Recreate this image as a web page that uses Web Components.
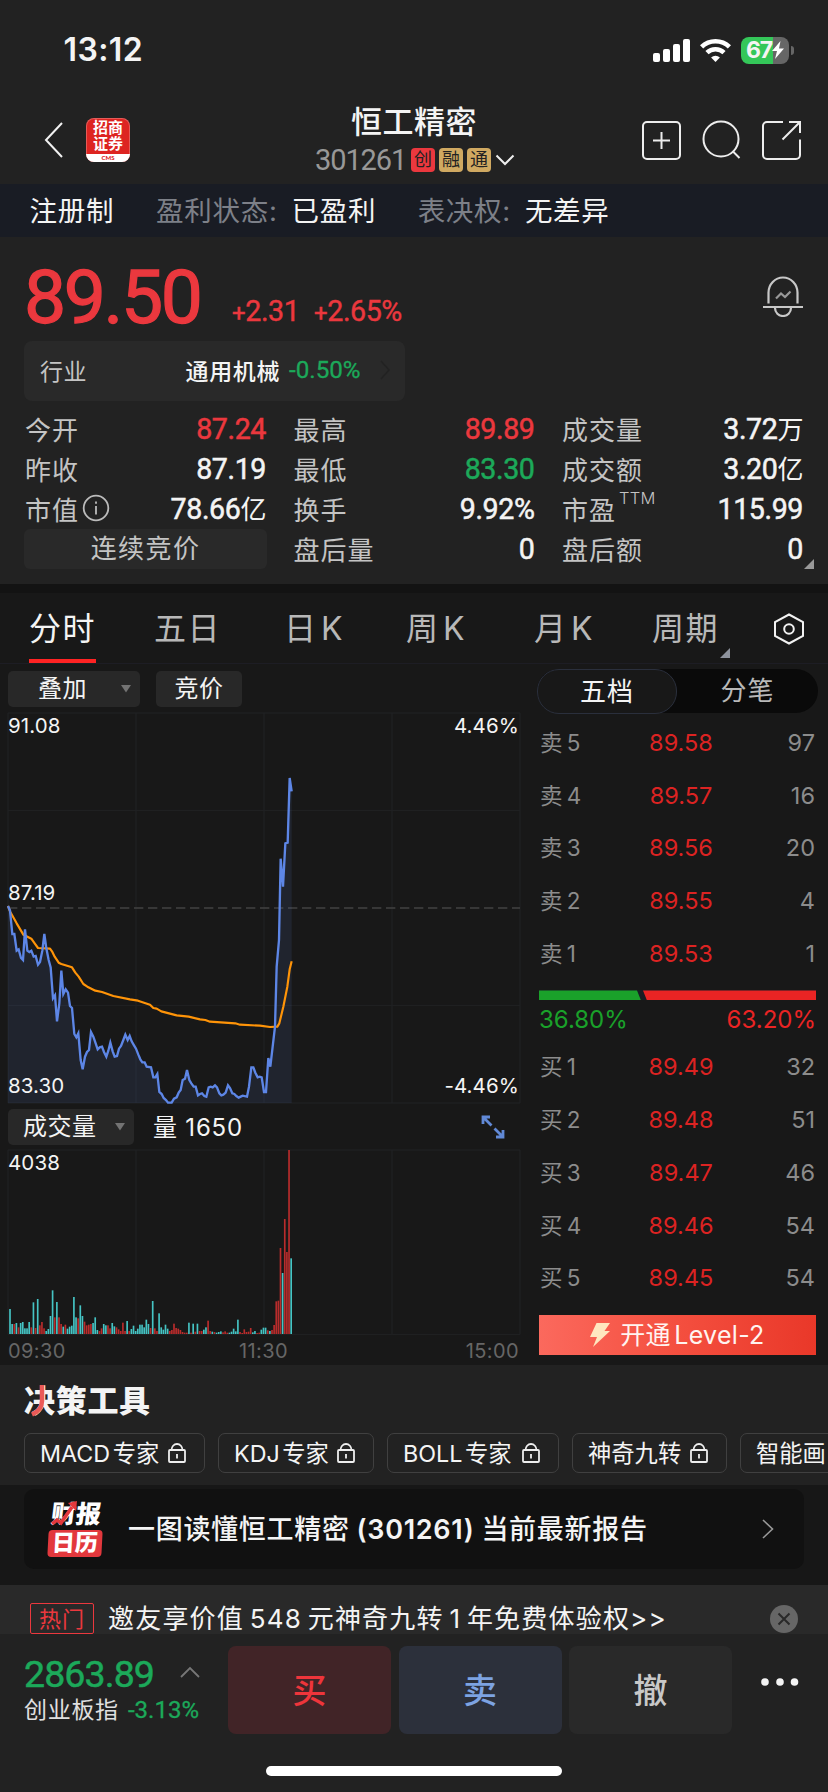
<!DOCTYPE html>
<html lang="zh-CN">
<head>
<meta charset="UTF-8">
<title>恒工精密 301261</title>
<style>
    :root {
        --bg: #222222;
        --bg-dark: #181818;
        --bg-box: #292929;
        --up: #eb383e;
        --down: #1ca95a;
        --label: #c4c4c4;
        --din: Roboto, "Noto Sans CJK SC", sans-serif;
    }

    body {
        margin: 0;
        width: 828px;
        height: 1792px;
        overflow: hidden;
        background: var(--bg);
        color: #f4f4f4;
        font-family: Inter, "Noto Sans CJK SC", sans-serif;
    }
</style>
</head>
<body>
<stock-page></stock-page>

<script>
function define(name, render) {
    customElements.define(name, class extends HTMLElement {
        connectedCallback() {
            if (this.shadowRoot) return;
            const shadow = this.attachShadow({ mode: "open" });
            shadow.innerHTML = "<style>* { box-sizing: border-box; } svg { display: block; flex: none; } span { white-space: nowrap; }</style>" + render(this);
        }
    });
}

define("status-bar", () => `
    <style>
        :host {
            display: flex;
            justify-content: space-between;
            align-items: center;
            height: 100px;
            padding: 0 34px 0 63.5px;
        }

        .time {
            font-size: 32px;
            font-weight: 600;
            line-height: 40px;
            letter-spacing: 0.4px;
        }

        .icons {
            display: flex;
            align-items: center;
            gap: 10px;
        }

        .battery {
            display: flex;
            align-items: center;
            gap: 2px;
        }

        .battery__body {
            display: flex;
            align-items: center;
            width: 48px;
            height: 27px;
            padding-left: 5px;
            border-radius: 8px;
            background: linear-gradient(to right, #34c759 32px, #666 32px);
            font-size: 23px;
            font-weight: 700;
            letter-spacing: -1.2px;
        }

        .battery__cap {
            width: 3px;
            height: 9px;
            border-radius: 0 4px 4px 0;
            background: #666;
        }
    </style>
    <span class="time">13:12</span>
    <div class="icons">
        <svg width="37" height="23" viewBox="0 0 37 23" fill="#fff">
            <rect x="0" y="14" width="7" height="9" rx="2"/>
            <rect x="10" y="10" width="7" height="13" rx="2"/>
            <rect x="20" y="5" width="7" height="18" rx="2"/>
            <rect x="30" y="0" width="7" height="23" rx="2"/>
        </svg>
        <svg width="31" height="24" viewBox="0 0 31 24" fill="none" stroke="#fff" stroke-width="4.6">
            <path d="M1.6 8.8A20 20 0 0 1 29.4 8.8"/>
            <path d="M7 14.6A12.4 12.4 0 0 1 24 14.6"/>
            <path d="M15.5 24l-4.4-4.6a6.5 6.5 0 0 1 8.8 0z" fill="#fff" stroke="none"/>
        </svg>
        <div class="battery">
            <div class="battery__body">
                67
                <svg width="12" height="18" viewBox="0 0 12 18" fill="#fff"><path d="M8.5 0L0 10h5L3 18l9-10.5H7z"/></svg>
            </div>
            <div class="battery__cap"></div>
        </div>
    </div>
`);

define("nav-header", () => `
    <style>
        :host {
            display: grid;
            grid-template-columns: 315px 1fr 187px;
            height: 84px;
        }

        .left {
            display: flex;
            align-items: center;
            gap: 23px;
            padding: 0 0 4px 44px;
        }

        .logo {
            display: flex;
            flex-direction: column;
            width: 44px;
            height: 44px;
            padding-top: 2px;
            overflow: hidden;
            border-radius: 8px;
            background: #dd2421;
            box-shadow: inset 0 0 0 1px rgba(255 255 255 / 0.25);
            text-align: center;
            font-size: 15px;
            font-weight: 700;
            line-height: 16px;
            color: #fff;
        }

        .logo__cms {
            height: 8px;
            margin-top: 2px;
            background: #fff;
            color: #dd2421;
            font: 900 6px/8px Lato, sans-serif;
        }

        .middle {
            display: flex;
            flex-direction: column;
        }

        .name {
            height: 42px;
            padding-left: 36px;
            font-size: 31px;
            font-weight: 500;
            line-height: 44px;
            letter-spacing: 0.5px;
        }

        .code {
            display: flex;
            align-items: center;
            gap: 4px;
            height: 36px;
        }

        .code__num {
            width: 92px;
            font: 400 29px/36px var(--din);
            letter-spacing: -1.1px;
            color: #989898;
        }

        .tag {
            width: 24px;
            height: 24px;
            border-radius: 4px;
            background: #d0a961;
            color: #222;
            font-size: 18px;
            line-height: 24px;
            text-align: center;
        }

        .tag--red {
            background: var(--up);
        }

        .right {
            display: flex;
            align-items: center;
            gap: 20px;
            padding-bottom: 4px;
        }
    </style>
    <div class="left">
        <svg width="19" height="36" viewBox="0 0 19 36" fill="none" stroke="#f2f2f2" stroke-width="2"><path d="M18 1L2 18l16 17"/></svg>
        <div class="logo">
            <span>招商</span>
            <span>证券</span>
            <div class="logo__cms">CMS</div>
        </div>
    </div>
    <div class="middle">
        <span class="name">恒工精密</span>
        <div class="code">
            <span class="code__num">301261</span>
            <span class="tag tag--red">创</span>
            <span class="tag">融</span>
            <span class="tag">通</span>
            <svg width="20" height="12" viewBox="0 0 20 12" fill="none" stroke="#eee" stroke-width="2"><path d="M1.5 1.5L10 10l8.5-8.5"/></svg>
        </div>
    </div>
    <div class="right">
        <svg width="40" height="40" viewBox="0 0 40 40" fill="none" stroke="#ededed" stroke-width="2">
            <rect x="2" y="2" width="37" height="37" rx="4"/>
            <path d="M20.5 12v17M12 20.5h17"/>
        </svg>
        <svg width="40" height="40" viewBox="0 0 40 40" fill="none" stroke="#ededed" stroke-width="2">
            <circle cx="20" cy="19" r="17.5"/>
            <path d="M31.5 31l7 7"/>
        </svg>
        <svg width="40" height="40" viewBox="0 0 40 40" fill="none" stroke="#ededed" stroke-width="2">
            <path d="M22 2H6a4 4 0 0 0-4 4v29a4 4 0 0 0 4 4h29a4 4 0 0 0 4-4V19.5"/>
            <path d="M28 2h11v11M39 2L21.5 19.5"/>
        </svg>
    </div>
`);

define("info-strip", () => `
    <style>
        :host {
            display: flex;
            align-items: center;
            height: 53px;
            padding-left: 29.5px;
            background: #191c24;
            font-size: 27.5px;
            line-height: 53px;
            letter-spacing: 0.7px;
        }

        span { padding-top: 2px; }

        .key {
            margin-right: 14px;
            color: #7d8088;
        }

        .status { margin-right: 41.5px; }
        .first { margin-right: 42px; }
    </style>
    <span class="first">注册制</span>
    <span class="key">盈利状态:</span>
    <span class="status">已盈利</span>
    <span class="key">表决权:</span>
    <span>无差异</span>
`);

define("stat-cell", (el) => `
    <style>
        :host {
            display: flex;
            justify-content: space-between;
            height: 40px;
            padding: 0 1px;
            color: #f4f4f4;
        }

        .label {
            display: flex;
            align-items: center;
            padding-bottom: 2px;
            color: var(--label);
            font-size: 26px;
            letter-spacing: 1px;
        }

        .value {
            font: 400 28.6px/40px var(--din);
            letter-spacing: -0.4px;
            -webkit-text-stroke: 0.5px;
        }

        .value b {
            font-size: 26px;
            font-weight: 400;
            -webkit-text-stroke: 0;
        }
    </style>
    <div class="label"><slot></slot></div>
    <span class="value" style="color: ${el.getAttribute("color") || "inherit"}">${el.getAttribute("value").replace(/[万亿]/, "<b>$&</b>")}</span>
`);

define("quote-panel", () => `
    <style>
        :host {
            display: flex;
            flex-direction: column;
            height: 347px;
            padding: 12px 24px 0;
        }

        .head {
            display: flex;
            height: 92px;
            color: var(--up);
            font-family: var(--din);
        }

        .price {
            width: 208px;
            font-size: 75px;
            line-height: 96px;
            letter-spacing: -2.4px;
            -webkit-text-stroke: 1.3px;
        }

        .change {
            width: 82px;
            margin-top: 45px;
            font-size: 28.6px;
            line-height: 34px;
            letter-spacing: -0.4px;
            -webkit-text-stroke: 0.4px;
        }

        .change small { font-size: 24px; }

        .bell {
            margin: 26px 1px 0 auto;
        }

        .industry {
            display: flex;
            align-items: center;
            width: 381px;
            height: 60px;
            padding: 0 15px 2px 16px;
            border-radius: 8px;
            background: var(--bg-box);
            font-size: 23px;
            letter-spacing: 0.6px;
        }

        .industry__label {
            margin-right: auto;
            color: var(--label);
        }

        .industry__name { font-weight: 500; }

        .industry__change {
            width: 100px;
            padding-left: 9px;
            color: var(--down);
            font: 400 24.2px/58px var(--din);
            letter-spacing: 0;
            -webkit-text-stroke: 0.3px;
        }

        .stats {
            display: grid;
            grid-template-columns: 243px 243px 243px;
            column-gap: 25.5px;
            margin-top: 8px;
        }

        .info { margin-left: 3px; }

        .phase {
            height: 40px;
            border-radius: 6px;
            background: var(--bg-box);
            color: var(--label);
            font-size: 26px;
            line-height: 40px;
            letter-spacing: 1.4px;
            text-align: center;
        }

        .ttm {
            margin: -20px 0 0 3px;
            font-size: 16.5px;
            font-weight: 300;
            letter-spacing: 0.2px;
        }

        .more {
            align-self: flex-end;
            width: 10px;
            height: 10px;
            margin: -10px -10px 0 0;
            background: #999;
            clip-path: polygon(100% 0, 100% 100%, 0 100%);
        }
    </style>
    <div class="head">
        <span class="price">89.50</span>
        <span class="change"><small>+</small>2.31</span>
        <span class="change"><small>+</small>2.65%</span>
        <svg class="bell" width="40" height="42" viewBox="0 0 40 42" fill="none" stroke="#c8c8c8" stroke-width="2.2">
            <path d="M5.5 28.5V17.5a14.5 15 0 0 1 29 0v11"/>
            <path d="M0 32h40M12 33a8 8 0 0 0 16 0" />
            <path d="M13 23.5l5-5 4 3.5 5.5-5.5" stroke="#999"/>
        </svg>
    </div>
    <div class="industry">
        <span class="industry__label">行业</span>
        <span class="industry__name">通用机械</span>
        <span class="industry__change">-0.50%</span>
        <svg width="10" height="20" viewBox="0 0 10 20" fill="none" stroke="#222" stroke-width="1.5"><path d="M1 1l8 9-8 9"/></svg>
    </div>
    <div class="stats">
        <stat-cell value="87.24" color="var(--up)">今开</stat-cell>
        <stat-cell value="89.89" color="var(--up)">最高</stat-cell>
        <stat-cell value="3.72万">成交量</stat-cell>
        <stat-cell value="87.19">昨收</stat-cell>
        <stat-cell value="83.30" color="var(--down)">最低</stat-cell>
        <stat-cell value="3.20亿">成交额</stat-cell>
        <stat-cell value="78.66亿">市值<svg class="info" width="28" height="28" viewBox="0 0 28 28" fill="none" stroke="#bbb" stroke-width="1.8"><circle cx="14" cy="14" r="12.3"/><path d="M14 12v8.5M14 7.5v2.2"/></svg></stat-cell>
        <stat-cell value="9.92%">换手</stat-cell>
        <stat-cell value="115.99">市盈<span class="ttm">TTM</span></stat-cell>
        <div class="phase">连续竞价</div>
        <stat-cell value="0">盘后量</stat-cell>
        <stat-cell value="0">盘后额</stat-cell>
    </div>
    <div class="more"></div>
`);

define("period-tabs", () => `
    <style>
        :host {
            display: flex;
            height: 80px;
            padding-left: 29px;
            border-top: 9px solid #131313;
            border-bottom: 1px solid #1d1d24;
            background: var(--bg-dark);
            color: #b8b8b8;
            font-size: 32px;
            line-height: 72px;
            letter-spacing: 1.5px;
        }

        .tab--active {
            width: 67px;
            border-bottom: 4px solid #ff2323;
            color: #f4f4f4;
        }

        .k {
            width: 125px;
            word-spacing: -7px;
        }

        .corner {
            width: 10px;
            height: 10px;
            margin: 55px 43px 0 0;
            background: #8d929c;
            clip-path: polygon(100% 0, 100% 100%, 0 100%);
        }

        svg { margin-top: 20px; }
    </style>
    <span class="tab--active">分时</span>
    <span style="width: 131px; padding-left: 58px; margin-right: 57px">五日</span>
    <span class="k" style="width: 122px">日 K</span>
    <span class="k" style="width: 128px">周 K</span>
    <span class="k" style="width: 118px">月 K</span>
    <span style="width: 68px">周期</span>
    <span class="corner"></span>
    <svg width="32" height="32" viewBox="0 0 32 32" fill="none" stroke="#f2f2f2" stroke-width="2"><path d="M16 1.5l14 7.5v14L16 30.5 2 23V9z"/><circle cx="16" cy="16" r="4.8"/></svg>
`);

// Coordinates are in thirds of a pixel
const price = "24,78 30,92 37,162 43,162 50,212 56,208 63,234 69,240 75,148 82,212 88,216 94,212 101,230 107,228 114,254 120,246 127,212 133,162 139,205 146,240 152,262 159,355 165,346 171,424 178,370 184,272 190,342 197,328 204,338 210,378 216,384 223,462 229,472 235,460 242,540 248,568 255,530 261,516 267,510 273,456 280,470 287,490 293,508 299,502 306,500 312,516 319,530 325,512 331,488 338,514 344,530 351,528 357,506 363,498 370,480 376,464 383,480 389,468 395,484 402,496 408,506 415,524 421,538 427,547 434,547 440,560 453,562 460,592 466,592 472,582 478,636 485,642 491,654 498,660 504,668 515,668 522,656 530,652 536,638 542,630 548,600 555,596 561,570 568,600 574,610 581,620 587,620 594,646 600,642 606,640 613,648 619,650 626,622 632,620 638,622 645,616 651,622 658,640 664,646 670,644 677,638 684,616 690,624 697,640 703,642 709,648 716,653 722,650 728,647 741,650 747,620 754,562 760,562 766,578 773,592 779,590 785,592 792,636 798,636 805,534 811,560 818,500 825,440 830,260 837,180 842,-64 849,20 856,-110 863,-112 869,-306 875,-266";
const average = "24,78 31,96 50,130 70,164 78,168 94,176 104,190 114,204 150,206 156,214 164,230 176,248 184,252 216,262 226,278 236,290 250,312 262,320 286,332 306,336 340,348 390,358 414,362 450,374 460,384 470,386 484,394 530,406 566,410 600,418 616,420 630,425 706,430 720,434 780,437 810,441 832,440 838,430 850,380 862,320 869,268 875,244";

// c = down minute, r = up minute
const volume = "c75 c30 r30 c33 r20 c33 c36 c17 c17 c36 r20 c95 r18 c105 r26 r36 r17 c9 c15 c54 c131 r50 c96 r50 r30 c22 r28 c16 c22 c25 c111 c50 r47 c86 c54 r37 r26 r28 r30 c33 c50 c12 r9 r17 c30 c26 r26 r17 c33 c23 r20 r14 r9 r34 r9 c39 r9 c15 c25 c9 c16 c28 c28 c20 c43 c30 r18 c99 r17 r9 c62 c20 c13 c28 c16 r9 r12 r31 r18 r16 r12 r6 r4 r4 c34 r4 c31 r7 c31 r9 r9 c13 c20 r40 r9 c7 r6 c4 c6 c8 r5 r8 r4 c4 c7 c16 c8 c43 r6 r3 r14 r6 r7 r18 c5 c9 r3 r4 c13 c19 c19 r11 c9 r12 r27 r98 r100 r258 c183 r345 r246 r552 c227";
const bars = volume.split(" ").map((v, i) => {
    const h = Number(v.slice(1));
    const fill = v[0] === "c" ? "#45c4c4" : "#b92c2c";
    return `<rect x="${(3.5 + 6.39 * i).toFixed(1)}" y="${552 - h}" width="5" height="${h}" fill="${fill}"/>`;
}).join("");

define("drop-button", () => `
    <style>
        :host {
            display: flex;
            align-items: center;
            justify-content: space-between;
            height: 36px;
            border-radius: 5px;
            background: #282828;
            font-size: 24px;
            line-height: 36px;
            letter-spacing: 0.5px;
        }
    </style>
    <span><slot></slot></span>
    <svg width="10" height="8" viewBox="0 0 10 8" fill="#737373"><path d="M0 0h10L5 7.5z"/></svg>
`);

define("time-chart", () => `
    <style>
        :host {
            display: flex;
            flex-direction: column;
            width: 512px;
            padding-top: 7px;
            margin-left: 8px;
        }

        .row {
            display: flex;
            align-items: center;
            height: 42px;
            font-size: 24px;
            letter-spacing: 0.5px;
        }

        .row--top { align-items: flex-start; }
        .row--volume { height: 47px; }

        .amount {
            margin-left: 19px;
            padding-bottom: 3px;
            letter-spacing: 0.8px;
        }

        .auction {
            width: 86px;
            height: 36px;
            margin-left: 16px;
            border-radius: 5px;
            background: #282828;
            line-height: 36px;
            text-align: center;
        }

        .plot {
            display: grid;
            height: 390px;
        }

        .plot--volume { height: 185px; }
        .plot > * { grid-area: 1 / 1; }

        .marks {
            display: flex;
            flex-direction: column;
            justify-content: space-between;
            padding: 0 1px 4px 0;
            font-size: 20.5px;
            line-height: 26px;
            letter-spacing: 0.1px;
        }

        .marks div {
            display: flex;
            justify-content: space-between;
        }

        .expand { margin: 0 15px 0 auto; }

        .times {
            display: grid;
            grid-template-columns: 1fr 1fr 1fr;
            height: 30px;
            padding: 0 1px 0 0;
            color: #666;
            font-size: 20px;
            line-height: 32px;
            letter-spacing: 0.4px;
        }
    </style>
    <div class="row row--top">
        <drop-button style="width: 132px; padding: 0 9px 0 30px">叠加</drop-button>
        <span class="auction">竞价</span>
    </div>
    <div class="plot">
        <svg width="512" height="390" viewBox="24 -501 1536 1170" fill="none" overflow="visible">
            <path d="M24-501H1560V669H24zM408-501V669M792-501V669M1176-501V669M24-209H1560M24 376H1560" stroke="#212224" stroke-width="3"/>
            <path d="M24 84H1560" stroke="#424242" stroke-width="5" stroke-dasharray="28 14"/>
            <polygon points="24,669 ${price} 875,669" fill="#6088e0" fill-opacity="0.11"/>
            <polyline points="${average}" stroke="#ff9408" stroke-width="6.5" stroke-linejoin="round"/>
            <polyline points="${price}" stroke="#5d86e6" stroke-width="7"/>
        </svg>
        <div class="marks">
            <div><span>91.08</span><span>4.46%</span></div>
            <div style="margin-top: -26px"><span>87.19</span></div>
            <div><span>83.30</span><span>-4.46%</span></div>
        </div>
    </div>
    <div class="row row--volume">
        <drop-button style="width: 126px; padding: 0 9px 0 15px">成交量</drop-button>
        <span class="amount">量 1650</span>
        <svg class="expand" width="24" height="24" viewBox="0 0 24 24" fill="none" stroke="#6189d6" stroke-width="2.8">
            <path d="M9 2H2V9M2 2l8.5 8.5M15 22h7V15M22 22l-8.5-8.5"/>
        </svg>
    </div>
    <div class="plot plot--volume">
        <svg width="512" height="185" viewBox="0 0 1536 555" fill="none" overflow="visible">
            <path d="M0 0H1536V553H0zM384 0V553M768 0V553M1152 0V553" stroke="#212224" stroke-width="3"/>
            ${bars}
        </svg>
        <div class="marks"><div><span>4038</span></div></div>
    </div>
    <div class="times">
        <span>09:30</span>
        <span style="text-align: center">11:30</span>
        <span style="text-align: right">15:00</span>
    </div>
`);

define("book-row", (el) => `
    <style>
        :host {
            display: grid;
            grid-template-columns: 96px 90px 1fr;
            height: 52.7px;
            padding: 0 1px;
            color: #8c8c8c;
            font-size: 23.5px;
            line-height: 52.7px;
        }

        .price {
            color: #dc2322;
            text-align: center;
        }

        .count { text-align: right; }
        .side {
            font-size: 22.5px;
            word-spacing: -2px;
        }
    </style>
    <span class="side">${el.getAttribute("side")}</span>
    <span class="price">${el.getAttribute("price")}</span>
    <span class="count">${el.getAttribute("count")}</span>
`);

define("order-book", () => `
    <style>
        :host {
            display: flex;
            flex-direction: column;
            width: 281px;
            padding-top: 5px;
            margin-right: 10px;
        }

        .switch {
            display: grid;
            grid-template-columns: 140px 141px;
            height: 44px;
            border-radius: 22px;
            background: #0a0a0a;
            color: #b8b8b8;
            font-size: 26px;
            line-height: 43px;
            letter-spacing: 1px;
            text-align: center;
        }

        .switch__on {
            border: 1px solid #2a2f3c;
            border-radius: 22px;
            background: #181818;
            color: #f4f4f4;
        }

        .rows, .ratio, .percent { margin: 0 2px; }
        .rows { margin-top: 4px; }

        .ratio {
            display: flex;
            justify-content: space-between;
            height: 10px;
            margin-top: 10px;
            background: #191c24;
        }

        .ratio__buy {
            width: 102px;
            background: #1aa12a;
            clip-path: polygon(0 0, 98px 0, 102px 100%, 0 100%);
        }

        .ratio__sell {
            width: 173px;
            background: #ea2424;
            clip-path: polygon(0 0, 100% 0, 100% 100%, 4px 100%);
        }

        .percent {
            display: flex;
            justify-content: space-between;
            height: 37px;
            color: #1aa12a;
            font-size: 24px;
            line-height: 40px;
        }

        .level2 {
            display: flex;
            align-items: center;
            justify-content: center;
            gap: 10px;
            height: 40px;
            margin: 10px 2px 0;
            background: linear-gradient(to right, #fb695d, #f44f3f 50%, #e93829);
            color: #fff4f0;
            font-size: 25px;
            letter-spacing: 0.3px;
            word-spacing: -4px;
        }

        .level2 span { padding-bottom: 4px; }
    </style>
    <div class="switch">
        <span class="switch__on">五档</span>
        <span>分笔</span>
    </div>
    <div class="rows">
        <book-row side="卖 5" price="89.58" count="97"></book-row>
        <book-row side="卖 4" price="89.57" count="16"></book-row>
        <book-row side="卖 3" price="89.56" count="20"></book-row>
        <book-row side="卖 2" price="89.55" count="4"></book-row>
        <book-row side="卖 1" price="89.53" count="1"></book-row>
    </div>
    <div class="ratio"><div class="ratio__buy"></div><div class="ratio__sell"></div></div>
    <div class="percent"><span>36.80%</span><span style="color: #ea2424">63.20%</span></div>
    <div class="rows">
        <book-row side="买 1" price="89.49" count="32"></book-row>
        <book-row side="买 2" price="89.48" count="51"></book-row>
        <book-row side="买 3" price="89.47" count="46"></book-row>
        <book-row side="买 4" price="89.46" count="54"></book-row>
        <book-row side="买 5" price="89.45" count="54"></book-row>
    </div>
    <div class="level2">
        <svg width="20" height="24" viewBox="0 0 20 24" fill="#ffe6bf"><path d="M6.5 0H20l-5.5 8H20L3 24l4-10H0z"/></svg>
        <span>开通 Level-2</span>
    </div>
`);

define("tool-chip", () => `
    <style>
        :host {
            display: flex;
            flex: none;
            align-items: center;
            justify-content: space-between;
            height: 40px;
            padding: 0 18px 0 15px;
            border: 1px solid #404040;
            border-radius: 7px;
            font-size: 23.3px;
            line-height: 37px;
            word-spacing: -4px;
        }
    </style>
    <span><slot></slot></span>
    <svg width="18" height="20" viewBox="0 0 18 20" fill="none" stroke="#eee" stroke-width="1.8"><rect x="1" y="7" width="16" height="12" rx="1"/><path d="M3.5 7a5.5 6 0 0 1 11 0M9 11v4.5"/></svg>
`);

define("tool-section", () => `
    <style>
        :host {
            display: block;
            height: 120px;
            padding: 17px 0 0 24px;
            overflow: hidden;
        }

        .title {
            position: relative;
            width: 130px;
            height: 38px;
            font-size: 31px;
            font-weight: 900;
            line-height: 38px;
            letter-spacing: 0.7px;
        }

        .title svg {
            position: absolute;
            left: 7px;
            top: 3px;
        }

        .chips {
            display: flex;
            gap: 13px;
            margin-top: 13px;
        }
    </style>
    <div class="title">
        <span>决策工具</span>
        <svg width="14" height="32" viewBox="0 0 14 32" fill="none" stroke="#eb5a57" stroke-width="4.5"><path d="M11 0v16q0 9-10 13.5"/></svg>
    </div>
    <div class="chips">
        <tool-chip style="width: 181px">MACD 专家</tool-chip>
        <tool-chip style="width: 156px">KDJ 专家</tool-chip>
        <tool-chip style="width: 172px">BOLL 专家</tool-chip>
        <tool-chip style="width: 155px">神奇九转</tool-chip>
        <tool-chip style="width: 155px">智能画</tool-chip>
    </div>
`);

define("report-card", () => `
    <style>
        :host {
            display: block;
            height: 100px;
            padding: 4px 24px 0;
            background: #171717;
        }

        .card {
            display: flex;
            align-items: center;
            height: 80px;
            padding: 0 30px 0 24px;
            border-radius: 10px;
            background: #111;
        }

        .badge {
            position: relative;
            width: 56px;
            height: 56px;
            color: #fff;
            font-size: 25px;
            font-weight: 900;
            text-align: center;
        }

        .badge div {
            height: 27px;
            line-height: 27px;
            transform: skewX(-7deg);
        }

        .badge div + div {
            width: 54px;
            margin-top: 2px;
            border-radius: 4px;
            background: #e2383d;
            font-size: 23px;
            transform: skewX(-3deg);
        }

        .badge svg {
            position: absolute;
            left: 3px;
            top: 0;
        }

        .text {
            margin: 0 auto 0 24px;
            padding-bottom: 3px;
            font-size: 27px;
            font-weight: 500;
            letter-spacing: 0.7px;
            word-spacing: -1px;
        }

        .text b { font-weight: 600; }
    </style>
    <div class="card">
        <div class="badge">
            <div>财报</div>
            <div>日历</div>
            <svg width="27" height="26" viewBox="0 0 27 26"><path d="M1 23l5-4 4 3L21 6" fill="none" stroke="#e2383d" stroke-width="3.5"/><path d="M17 2l9-2-1 10z" fill="#e2383d"/></svg>
        </div>
        <span class="text">一图读懂恒工精密 <b>(301261)</b> 当前最新报告</span>
        <svg width="12" height="20" viewBox="0 0 12 20" fill="none" stroke="#999" stroke-width="1.6"><path d="M1 1l9.5 9L1 19"/></svg>
    </div>
`);

define("promo-bar", () => `
    <style>
        :host {
            display: flex;
            align-items: flex-start;
            height: 49px;
            padding: 18px 30px 0;
            overflow: hidden;
            background: #292929;
        }

        .hot {
            width: 64px;
            height: 31px;
            border: 1px solid var(--up);
            border-radius: 2px;
            color: var(--up);
            font-size: 22px;
            line-height: 31px;
            letter-spacing: 1px;
            text-align: center;
        }

        .text {
            margin: 0 auto 0 14px;
            font-size: 26px;
            line-height: 31px;
            letter-spacing: 1.2px;
            word-spacing: -2.8px;
        }

        svg { margin-top: 2px; }
    </style>
    <span class="hot">热门</span>
    <span class="text">邀友享价值 548 元神奇九转 1 年免费体验权&gt;&gt;</span>
    <svg width="28" height="28" viewBox="0 0 28 28"><circle cx="14" cy="14" r="14" fill="#666"/><path d="M8.5 8.5l11 11M19.5 8.5l-11 11" stroke="#292929" stroke-width="2"/></svg>
`);

define("trade-bar", () => `
    <style>
        :host {
            display: flex;
            flex-direction: column;
            align-items: center;
            height: 158px;
            background: var(--bg);
        }

        .bar {
            display: flex;
            width: 100%;
            height: 132px;
            padding: 12px 28px 0 24px;
        }

        .index {
            display: grid;
            grid-template-columns: 1fr auto;
            grid-template-rows: 48px 32px;
            width: 176px;
            margin-right: 28px;
            color: var(--down);
            font-family: var(--din);
        }

        .index__value {
            font-size: 37.5px;
            line-height: 57px;
            letter-spacing: -0.9px;
            -webkit-text-stroke: 0.5px;
        }

        .index svg { margin-top: 20px; }

        .index__name {
            grid-column: 1 / 3;
            display: flex;
            justify-content: space-between;
            padding-right: 1px;
            font-size: 24px;
            line-height: 33px;
            -webkit-text-stroke: 0.3px;
        }

        .index__name span:first-child {
            color: #e0e0e0;
            font-size: 23px;
            letter-spacing: 0.7px;
            -webkit-text-stroke: 0;
        }

        .action {
            width: 163px;
            height: 88px;
            margin-right: 7.5px;
            border-radius: 8px;
            font-size: 34px;
            font-weight: 500;
            line-height: 89px;
            text-align: center;
        }

        .buy { background: #412427; color: #ee353b; }
        .sell { background: #2c303b; color: #7da3e2; }
        .cancel { background: var(--bg-box); color: #c8c8c8; }

        .dots { margin: 31px 0 0 auto; }

        .home {
            width: 296px;
            height: 10px;
            border-radius: 5px;
            background: #fff;
        }
    </style>
    <div class="bar">
        <div class="index">
            <span class="index__value">2863.89</span>
            <svg width="20" height="12" viewBox="0 0 20 12" fill="none" stroke="#777" stroke-width="1.8"><path d="M1 11l9-9 9 9"/></svg>
            <div class="index__name"><span>创业板指</span><span>-3.13%</span></div>
        </div>
        <div class="action buy">买</div>
        <div class="action sell">卖</div>
        <div class="action cancel">撤</div>
        <svg class="dots" width="40" height="10" viewBox="0 0 40 10" fill="#f4f4f4"><circle cx="5" cy="5" r="3.8"/><circle cx="20" cy="5" r="3.8"/><circle cx="34.5" cy="5" r="3.8"/></svg>
    </div>
    <div class="home"></div>
`);

define("stock-page", () => `
    <style>
        :host { display: block; }

        main {
            display: flex;
            justify-content: space-between;
            height: 701px;
            background: var(--bg-dark);
        }
    </style>
    <status-bar></status-bar>
    <nav-header></nav-header>
    <info-strip></info-strip>
    <quote-panel></quote-panel>
    <period-tabs></period-tabs>
    <main>
        <time-chart></time-chart>
        <order-book></order-book>
    </main>
    <tool-section></tool-section>
    <report-card></report-card>
    <promo-bar></promo-bar>
    <trade-bar></trade-bar>
`);
</script>
</body>
</html>
